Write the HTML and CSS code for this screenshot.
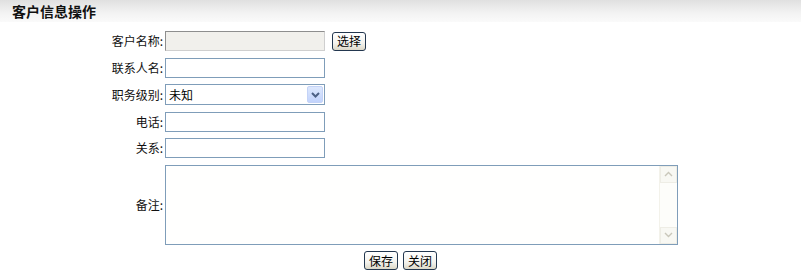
FILE: index.html
```html
<!DOCTYPE html>
<html lang="zh">
<head>
<meta charset="utf-8">
<title>客户信息操作</title>
<link rel="stylesheet" href="styles.css">
</head>
<body>
<div class="header"><span class="title">客户信息操作</span></div>
<form class="form">
  <label class="lbl">客户名称:</label>
  <div class="field">
    <input class="txt disabled" type="text" disabled>
    <button type="button" class="btn">选择</button>
  </div>
  <label class="lbl">联系人名:</label>
  <div class="field"><input class="txt" type="text"></div>
  <label class="lbl">职务级别:</label>
  <div class="field">
    <div class="select">
      <span class="sel-text">未知</span>
      <span class="sel-arrow">
        <svg width="9" height="6" viewBox="0 0 9 6"><path d="M1 1 L4.5 4.5 L8 1" fill="none" stroke="#4d6185" stroke-width="2"/></svg>
      </span>
    </div>
  </div>
  <label class="lbl">电话:</label>
  <div class="field"><input class="txt" type="text"></div>
  <label class="lbl">关系:</label>
  <div class="field"><input class="txt" type="text"></div>
  <label class="lbl">备注:</label>
  <div class="field">
    <div class="area">
      <textarea class="area-text"></textarea>
      <div class="scroll">
        <span class="sbtn"><svg width="9" height="6" viewBox="0 0 9 6"><path d="M1 5 L4.5 1.5 L8 5" fill="none" stroke="#c9c7ba" stroke-width="1.4"/></svg></span>
        <span class="strack"></span>
        <span class="sbtn"><svg width="9" height="6" viewBox="0 0 9 6"><path d="M1 1 L4.5 4.5 L8 1" fill="none" stroke="#c9c7ba" stroke-width="1.4"/></svg></span>
      </div>
    </div>
  </div>
  <div class="actions">
    <button type="button" class="btn">保存</button>
    <button type="button" class="btn">关闭</button>
  </div>
</form>
</body>
</html>
```
FILE: styles.css
```css
html, body {
  margin: 0;
  padding: 0;
  background: #fff;
  font-family: "Noto Sans CJK SC", "DejaVu Sans", sans-serif;
  font-size: 12px;
  color: #000;
}
.header {
  height: 22px;
  background: linear-gradient(to bottom, #e0e0e0 0%, #f3f3f3 60%, #fafafa 100%);
  padding-left: 12px;
  display: flex;
  align-items: center;
}
.title {
  font-weight: bold;
  font-size: 14px;
  line-height: 16px;
  color: #111;
}
.form {
  display: grid;
  grid-template-columns: 165px auto;
  row-gap: 6.5px;
  padding-top: 9px;
  align-items: center;
}
.lbl {
  text-align: right;
  padding-right: 2px;
  line-height: 14px;
  white-space: nowrap;
  color: #111;
}
.field {
  display: flex;
  align-items: center;
  gap: 7px;
}
.txt {
  box-sizing: border-box;
  width: 160px;
  height: 20px;
  margin: 0;
  border: 1px solid #7f9db9;
  background: #fff;
  padding: 1px 3px;
  font: inherit;
}
.txt.disabled {
  background: #f1f0ec;
  border-color: #8e8e8e #cfcfcf #cfcfcf #8e8e8e;
}
.btn {
  box-sizing: border-box;
  height: 19px;
  width: 34px;
  margin: 0;
  padding: 0;
  border: 1px solid #23374f;
  border-radius: 3px;
  background: linear-gradient(to bottom, #ffffff 0%, #f4f3ee 60%, #dcd8c8 100%);
  font: inherit;
  font-size: 12px;
  line-height: 16px;
  color: #000;
}
.select {
  box-sizing: border-box;
  width: 160px;
  height: 21px;
  border: 1px solid #7f9db9;
  background: #fff;
  display: flex;
  align-items: center;
  justify-content: space-between;
  padding: 1px;
}
.sel-text {
  padding-left: 2px;
}
.sel-arrow {
  width: 16px;
  height: 17px;
  box-sizing: border-box;
  border: 1px solid #c4d3f7;
  border-radius: 2px;
  background: linear-gradient(to bottom, #dde8fd 0%, #c2d3fc 100%);
  display: flex;
  align-items: center;
  justify-content: center;
}
.area {
  box-sizing: border-box;
  width: 513px;
  height: 80px;
  border: 1px solid #7f9db9;
  background: #fffffe;
  display: flex;
}
.area-text {
  flex: 1;
  border: 0;
  margin: 0;
  padding: 2px;
  resize: none;
  background: transparent;
  font: inherit;
  outline: none;
}
.scroll {
  width: 17px;
  display: flex;
  flex-direction: column;
  background: #fdfdfa;
  border-left: 1px solid #f3f2ea;
}
.sbtn {
  box-sizing: border-box;
  height: 17px;
  border: 1px solid #eeede5;
  background: #f8f8f3;
  display: flex;
  align-items: center;
  justify-content: center;
}
.strack {
  flex: 1;
}
.actions {
  grid-column: 1 / 3;
  display: flex;
  justify-content: center;
  gap: 5px;
}
```
